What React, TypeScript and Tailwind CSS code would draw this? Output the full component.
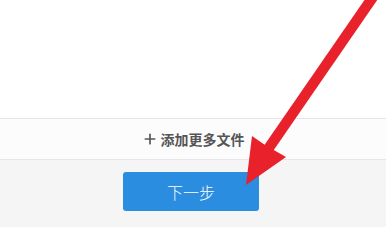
import { Plus } from "lucide-react";

export default function App() {
  return (
    <div
      className="relative w-[386px] h-[227px] overflow-hidden bg-[#f5f5f6]"
      style={{ fontFamily: '"Noto Sans CJK SC", "Liberation Sans", sans-serif' }}
    >
      {/* upload list area */}
      <div className="h-[118px] bg-white" />

      {/* add more files bar */}
      <div className="h-[42px] flex items-center justify-center gap-[3px] bg-[#fcfcfc] border-y border-[#e6e6e6]">
        <Plus className="w-4 h-4 text-[#555]" strokeWidth={2.5} />
        <span className="text-[14px] font-bold text-[#555] leading-none">添加更多文件</span>
      </div>

      {/* next step */}
      <div className="flex justify-center pt-[12px] pr-[4px]">
        <button className="w-[136px] h-[39px] rounded-[3px] bg-[#2a8de0] text-white text-[16px] font-light">
          下一步
        </button>
      </div>

      {/* red annotation arrow drawn over the screenshot */}
      <svg className="absolute inset-0 pointer-events-none" width="386" height="227" viewBox="0 0 386 227">
        <line x1="375" y1="-6" x2="266" y2="152" stroke="#e8212b" strokeWidth="10.5" />
        <polygon points="246,185 252,136 265,145 286,157" fill="#e8212b" />
      </svg>
    </div>
  );
}
